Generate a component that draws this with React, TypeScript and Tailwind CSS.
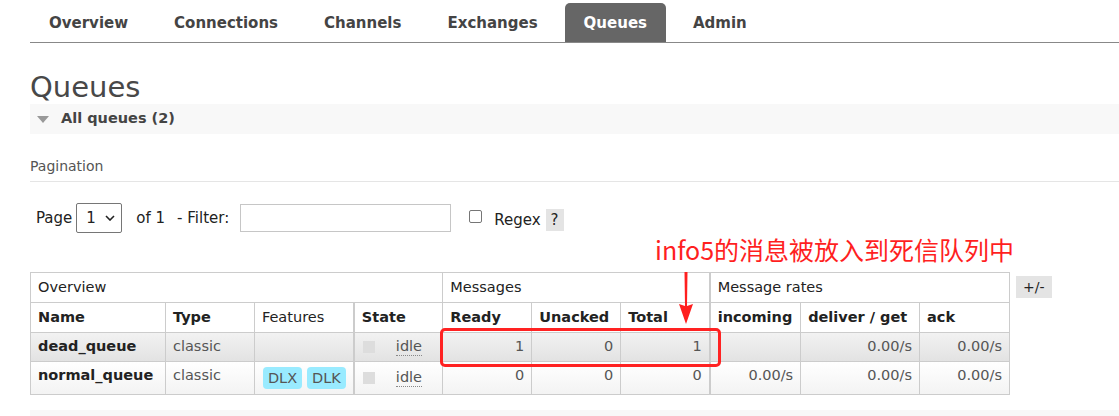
const tabs = ["Overview", "Connections", "Channels", "Exchanges", "Queues", "Admin"];

const cell = "border border-[#ccc] px-[7px] text-left";
const num = "border border-[#ccc] px-[7px] text-right text-[#555]";

function StateCell() {
  return (
    <td className="border border-[#ccc] border-l-2 px-[8px]">
      <div className="flex items-center">
        <span className="w-[12px] h-[12px] bg-[#ddd] inline-block" />
        <span className="ml-[21px] text-[#555] border-b border-dotted border-[#888] leading-[17px]">idle</span>
      </div>
    </td>
  );
}

export default function App() {
  return (
    <div className="relative w-[1119px] h-[416px] overflow-hidden bg-white text-[#444] font-['DejaVu_Sans',Verdana,sans-serif]">
      <div className="pl-[30px]">
        <div className="flex items-end pt-[3px] border-b border-[#888] h-[43px]">
          {tabs.map((t) => (
            <div
              key={t}
              className={
                "h-[39px] px-[19px] mr-[8px] pt-[1px] flex items-center font-bold text-[15px] rounded-t-[5px] " +
                (t === "Queues" ? "bg-[#666] text-white" : "text-[#444]")
              }
            >
              {t}
            </div>
          ))}
        </div>

        <h1 className="text-[29px] leading-[34px] mt-[27px] text-[#484848]">Queues</h1>

        <div className="h-[30px] bg-[#f8f8f8] flex items-center">
          <svg width="12" height="8" viewBox="0 0 12 8" className="ml-[7px] mt-[1px]">
            <polygon points="0,0 12,0 6,7" fill="#999" />
          </svg>
          <span className="ml-[12px] font-bold text-[14.5px] text-[#444]">All queues (2)</span>
        </div>

        <div className="mt-[22px] text-[14px] text-[#555] pb-[4px] border-b border-[#e5e5e5] w-[1089px]">Pagination</div>

        <div className="flex items-center mt-[21px] ml-[6px] text-[15px] text-[#222]">
          <span>Page</span>
          <div className="ml-[4px] w-[46px] h-[30px] border border-[#767676] rounded-[2px] flex items-center pl-[9px]">
            <span className="text-[15px]">1</span>
            <svg width="10" height="6" viewBox="0 0 10 6" className="ml-[9px]">
              <polyline points="1,1 5,5 9,1" fill="none" stroke="#222" strokeWidth="1.6" />
            </svg>
          </div>
          <span className="ml-[14px]">of 1</span>
          <span className="ml-[12px]">- Filter:</span>
          <div className="ml-[11px] w-[211px] h-[28px] border border-[#c6c6c6]" />
          <div className="ml-[18px] w-[13px] h-[13px] border border-[#767676] rounded-[2px] mb-[3px]" />
          <span className="ml-[12px] mt-[4px]">Regex</span>
          <span className="ml-[5px] mt-[3px] bg-[#e4e4e4] px-[5px] h-[22px] leading-[22px]">?</span>
        </div>

        <div className="flex items-start mt-[39px]">
          <table className="border-collapse text-[14.5px] text-[#222] w-[980px]">
            <thead>
              <tr className="h-[30px]">
                <th colSpan={4} className={cell + " font-normal"}>Overview</th>
                <th colSpan={3} className={cell + " font-normal"}>Messages</th>
                <th colSpan={3} className={cell + " font-normal border-l-2"}>Message rates</th>
              </tr>
              <tr className="h-[30px]">
                <th className={cell + " w-[135px]"}>Name</th>
                <th className={cell + " w-[89px]"}>Type</th>
                <th className={cell + " w-[99px] font-normal"}>Features</th>
                <th className={cell + " w-[89px] border-l-2"}>State</th>
                <th className={cell + " w-[89px]"}>Ready</th>
                <th className={cell + " w-[89px]"}>Unacked</th>
                <th className={cell + " w-[89px]"}>Total</th>
                <th className={cell + " w-[91px] border-l-2"}>incoming</th>
                <th className={cell + " w-[119px]"}>deliver / get</th>
                <th className={cell + " w-[90px]"}>ack</th>
              </tr>
            </thead>
            <tbody>
              <tr className="h-[29px] bg-gradient-to-b from-[#f2f2f2] to-[#e2e2e2]">
                <td className={cell + " font-bold"}>dead_queue</td>
                <td className={cell + " text-[#555]"}>classic</td>
                <td className={cell}></td>
                <StateCell />
                <td className={num}>1</td>
                <td className={num}>0</td>
                <td className={num}>1</td>
                <td className={num + " border-l-2"}></td>
                <td className={num}>0.00/s</td>
                <td className={num}>0.00/s</td>
              </tr>
              <tr className="h-[33px] bg-gradient-to-b from-[#ffffff] to-[#f3f3f3]">
                <td className={cell + " font-bold align-top pt-[3px]"}>normal_queue</td>
                <td className={cell + " text-[#555] align-top pt-[3px]"}>classic</td>
                <td className={cell}>
                  <div className="flex gap-[5px] ml-[1px]">
                    <span className="bg-[#99ebff] text-[#555] rounded-[4px] px-[5px] leading-[22px]">DLX</span>
                    <span className="bg-[#99ebff] text-[#555] rounded-[4px] px-[5px] leading-[22px]">DLK</span>
                  </div>
                </td>
                <StateCell />
                <td className={num + " align-top pt-[3px]"}>0</td>
                <td className={num + " align-top pt-[3px]"}>0</td>
                <td className={num + " align-top pt-[3px]"}>0</td>
                <td className={num + " border-l-2 align-top pt-[3px]"}>0.00/s</td>
                <td className={num + " align-top pt-[3px]"}>0.00/s</td>
                <td className={num + " align-top pt-[3px]"}>0.00/s</td>
              </tr>
            </tbody>
          </table>
          <span className="ml-[6px] mt-[4px] bg-[#e4e4e4] px-[7px] h-[22px] leading-[22px] text-[14px] text-[#222]">+/-</span>
        </div>

        <div className="mt-[15px] h-[10px] bg-[#f8f8f8]" />
      </div>

      {/* annotation overlay */}
      <div className="absolute left-[655px] top-[232px] text-[25px] leading-[34px] text-[#ff1f1f] font-['Noto_Sans_CJK_SC',sans-serif]">
        info5的消息被放入到死信队列中
      </div>
      <svg className="absolute left-[676px] top-[272px]" width="20" height="52" viewBox="0 0 20 52">
        <polygon points="8.5,0 11.5,0 11,34 17,32 10,52 3,32 9,34" fill="#ff1f1f" />
      </svg>
      <div className="absolute left-[440px] top-[328px] w-[281px] h-[39px] border-[3px] border-[#ff2222] rounded-[5px]" />
    </div>
  );
}
